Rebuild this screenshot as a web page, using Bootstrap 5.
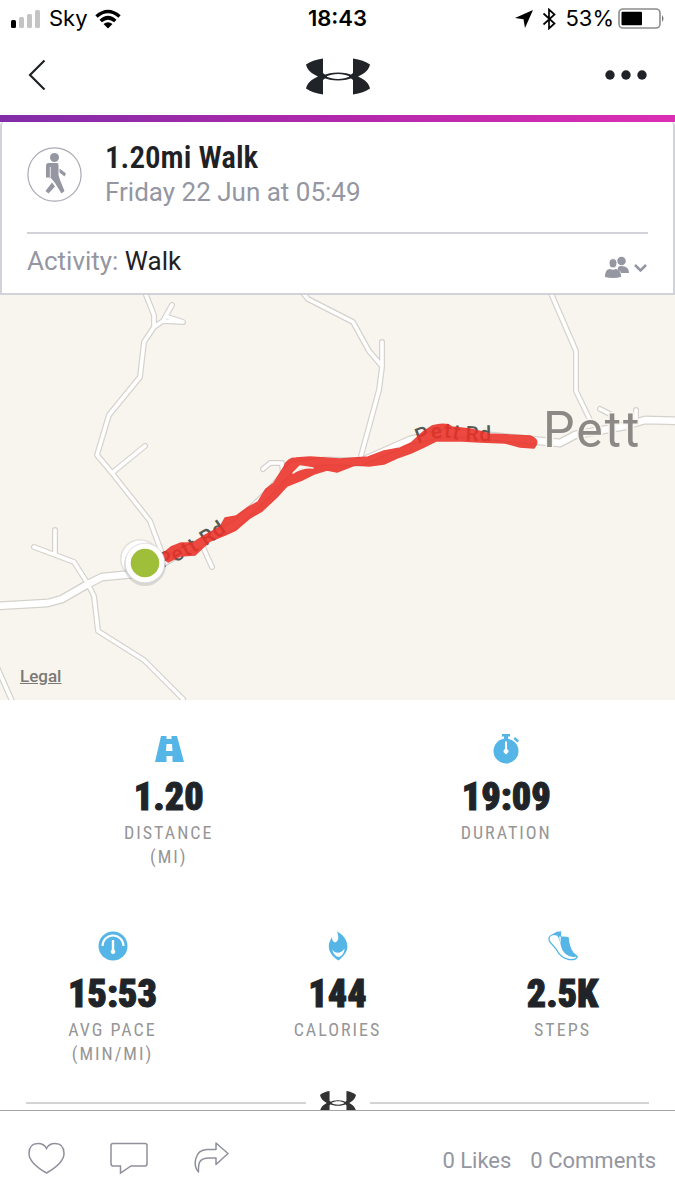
<!DOCTYPE html>
<html lang="en">
<head>
<meta charset="utf-8">
<meta name="viewport" content="width=device-width, initial-scale=1">
<title>1.20mi Walk</title>
<link rel="stylesheet" href="https://cdn.jsdelivr.net/npm/bootstrap@5.3.0/dist/css/bootstrap.min.css">
<style>
  body { font-family: Roboto, "Liberation Sans", sans-serif; color: #1f2225; background: #fff; }
  svg { display: block; flex-shrink: 0; }
  .muted { color: #9496a1; }
  .status-bar { height: 37px; padding: 0 10px; font: 22px/37px Inter, sans-serif; color: #000; }
  .status-side { flex: 1 1 0; }
  .app-header { height: 78px; padding: 0 26px; }
  .app-header .header-side { flex: 1 1 0; }
  .accent { height: 7px; background: linear-gradient(90deg, #812da7, #b128ab 50%, #dc2fb3); }
  .plain { border: 0; padding: 0; background: none; color: inherit; text-decoration: none; }
  .scroller { flex: 1 1 0; min-height: 0; overflow-y: auto; scrollbar-width: none; }
  .scroller::-webkit-scrollbar { display: none; }
  .summary { border: 2px solid #d2d3da; border-top: 0; border-radius: 4px 4px 0 0; padding: 0 25px; }
  .summary-top { height: 112px; padding-bottom: 6px; border-bottom: 2px solid #d2d3da; gap: 23px; }
  .summary-top h1 { font: 600 31px/36px "Roboto Condensed", "Open Sans Condensed", Roboto, sans-serif; margin: 0; }
  .detail { font-size: 26px; line-height: 32px; margin: 0; }
  .summary-bottom { height: 59px; padding-bottom: 6px; }
  .sharing { padding-top: 12px; }
  .map { background: #f8f5ee; }
  .map > svg { width: 100%; height: auto; }
  .legal { position: absolute; left: 20px; bottom: 12px; font: 500 17px/24px Roboto, sans-serif; color: #7b7975; }
  .stats { padding-top: 33px; }
  .stats-row { margin-bottom: 61px; }
  .stat-icon { height: 32px; margin-bottom: 8px; color: #55b5e6; }
  .stat-value { font: 900 38px/48px "Roboto Condensed", "Open Sans Condensed", Roboto, sans-serif; color: #202428; -webkit-text-stroke: 1px #202428; margin: 0; }
  .stat-label { font: 18px/24px "Roboto Condensed", "Open Sans Condensed", Roboto, sans-serif; letter-spacing: 2px; color: #969696; margin: 0; }
  .divider { padding: 0 26px; gap: 14px; margin-top: -36px; }
  .divider hr { flex: 1; margin: 0; border-top: 2px solid #d4d4d4; opacity: 1; }
  .action-bar { height: 90px; border-top: 1px solid #a5a5a8; padding: 6px 19px 0 28px; background: #fff; }
  .actions { gap: 45px; }
  .counts { gap: 19px; font-size: 22px; padding-top: 4px; }
</style>
</head>
<body>
<svg width="0" height="0" class="position-absolute" aria-hidden="true">
  <symbol id="brand" viewBox="0 0 64 36">
    <g id="brand-half">
      <path d="M17 0C10 1 4 3 0 6C1 11 5 15 12 18C5 21 1 25 0 30C4 33 10 35 17 36V21.500C19 19.500 21 19 21 18C21 17 19 16.500 17 14.500Z"/>
      <path d="M17 17C21 15 26 14 32 14V15.500C27 15.500 24 16.500 20 18C24 19.500 27 20.500 32 20.500V22C26 22 21 21 17 19Z"/>
    </g>
    <use href="#brand-half" transform="matrix(-1 0 0 1 64 0)"/>
  </symbol>
</svg>

<div class="vh-100 d-flex flex-column overflow-hidden">
  <div class="status-bar d-flex align-items-center">
    <div class="status-side d-flex align-items-center">
      <svg width="31" height="20" viewBox="0 0 31 20"><rect x="1" y="11" width="5" height="8" rx="1.500"/><g fill="#c4c4c4"><rect x="9" y="8" width="5" height="11" rx="1.500"/><rect x="17" y="5" width="5" height="14" rx="1.500"/><rect x="25" y="1" width="5" height="18" rx="1.500"/></g></svg>
      <span class="ms-2">Sky</span>
      <svg class="ms-1" width="32" height="20" viewBox="0 0 32 20" fill="none" stroke="#000" stroke-width="3.600"><path d="M4.500 7.500Q16 -2.500 27.500 7.500M8.700 12Q16 5.500 23.300 12"/><path d="M11.500 15Q16 11.500 20.500 15L16 19.500Z" fill="#000" stroke="none"/></svg>
    </div>
    <div class="fw-semibold">18:43</div>
    <div class="status-side d-flex align-items-center justify-content-end">
      <svg width="18" height="18" viewBox="0 0 18 18"><path d="M18 0L0 8L8.500 9.300L10 18Z"/></svg>
      <svg class="mx-2" width="16" height="22" viewBox="0 0 16 22" fill="none" stroke="#000" stroke-width="1.700"><path d="M2.500 5.500L13.500 15.500L8 20.500V1.500L13.500 6.500L2.500 16.500"/></svg>
      <span class="me-1">53%</span>
      <svg width="47" height="22" viewBox="0 0 47 22"><rect x="1" y="1" width="41" height="19" rx="4" fill="#fff" stroke="#8c8c8c" stroke-width="1.600"/><rect x="3.500" y="3.800" width="20.500" height="13.500" rx="1"/><path d="M44 7Q47 10.500 44 14Z" fill="#777"/></svg>
    </div>
  </div>

  <header class="app-header d-flex align-items-center">
    <div class="header-side d-flex">
      <button type="button" class="plain" aria-label="Back"><svg width="22" height="34" viewBox="0 0 22 34" fill="none" stroke="#1f2225" stroke-width="2.200"><path d="M18.500 1.500L4 16L18.500 30.500"/></svg></button>
    </div>
    <svg width="64" height="37" fill="#202428" aria-label="Brand"><use href="#brand"/></svg>
    <div class="header-side d-flex justify-content-end">
      <button type="button" class="plain" aria-label="More"><svg width="46" height="12" viewBox="0 0 46 12" fill="#202428"><circle cx="7" cy="5" r="4.700"/><circle cx="23" cy="5" r="4.700"/><circle cx="39" cy="5" r="4.700"/></svg></button>
    </div>
  </header>
  <div class="accent"></div>

  <main class="scroller">
    <section class="summary">
      <div class="summary-top d-flex align-items-center">
        <svg width="55" height="55" viewBox="0 0 55 55" fill="#9496a1"><circle cx="27.500" cy="27.500" r="26.600" fill="#fff" stroke="#aaabb5" stroke-width="1.200"/><circle cx="27.500" cy="10.500" r="4.500"/><path d="M21.500 16H30Q31.500 16 31.500 18V28L33 33L37.500 44L34.500 46.500L28 36L23.500 30.500H19V19Q19 16 21.500 16Z"/><path d="M32.500 21.500L39 26.500L37.500 29.500L32.500 25.500Z"/><path d="M25 35.500L28 39.500L21.500 46.500L18.500 44Z"/><path d="M23.300 20V30" stroke="#fff" stroke-width="0.800"/></svg>
        <div>
          <h1>1.20mi Walk</h1>
          <p class="detail muted">Friday 22 Jun at 05:49</p>
        </div>
      </div>
      <div class="summary-bottom d-flex align-items-center justify-content-between">
        <p class="detail"><span class="muted">Activity:</span> Walk</p>
        <button type="button" class="plain sharing" aria-label="Shared with friends">
          <svg width="43" height="24" viewBox="0 0 43 24" fill="#9496a1"><circle cx="16.500" cy="6" r="4.300"/><path d="M13 15Q12 11 16 11Q24 11 24 18H16Q16 16 13 15Z"/><path d="M4 7.500Q4 3.500 8 3.500T12 7.500Q12 13 8 13T4 7.500Z" stroke="#fff"/><path d="M0 22Q0 14 5 14Q8 15.500 11 14Q16 14.500 16 22Q8 24 0 22Z"/><path d="M30 10L35.500 15.500L41 10" fill="none" stroke="#9496a1" stroke-width="2.600"/></svg>
        </button>
      </div>
    </section>

    <section class="map position-relative">
      <svg viewBox="0 295 675 405" role="img" aria-label="Route map" fill="none" stroke-linecap="round" stroke-linejoin="round">
        <defs>
          <g id="lanes">
            <path d="M144 290L154 315V327L144 342L140 377L109 415L97 455L112 473L150 521L163 556M154 327L163 321L172 305M163 321L183 322L168 317M112 473L145 446"/>
            <path d="M303 293L308 299L353 322L369 351L381 365M382 342V367L379 390L361 456M263 469L270 463H282L283 476M550 291L576 351V391L590 420M600 409L612 415M636 410V420M202 545L212 567"/>
            <path d="M34 547L74 562L88 584L94 596L98 631L144 660L183 699M55 530V554M-6 660L12 701"/>
          </g>
          <g id="main-road"><path d="M-5 606L48 603L62 599L88 584L102 577L145 573L185 550L235 525L270 491L292 466L325 461L360 462L410 440L450 432L510 438L560 443L575 435L625 426L645 420L680 421"/></g>
          <path id="label-east" d="M418 444Q438 435 455 439T510 440"/>
          <path id="label-west" d="M162 568Q205 551 250 514"/>
        </defs>
        <g stroke="#d5d2cd"><use href="#lanes" stroke-width="6"/><use href="#main-road" stroke-width="9"/></g>
        <g stroke="#fff"><use href="#lanes" stroke-width="3.600"/><use href="#main-road" stroke-width="6.500"/></g>
        <g font-family="Roboto, sans-serif" font-size="21" font-weight="500" fill="#565a57">
          <text letter-spacing="1"><textPath href="#label-east">Pett Rd</textPath></text>
          <text letter-spacing="1"><textPath href="#label-west">Pett Rd</textPath></text>
        </g>
        <g fill="#eb3027" stroke="#eb3027" stroke-width="1.500" opacity="0.880">
          <path d="M160 556L171 547L181 543L193 543L202 537L220 527L225 518L236 516L247 508L258 502L266 489L274 483L284 467Q287 458 296 458L310 457L340 459L368 457L384 451L400 448L411 443L423 432L432 426Q446 422 452 427L470 429L490 434L530 436Q541 440 534 448L520 447L505 443L480 442L462 441L448 441L436 441L424 447L411 453L397 458L384 464L369 466L355 465L337 472L327 470L314 474L302 480L287 486L277 497L262 511L250 518L236 530L225 535L210 541L195 555L180 556L168 562Z"/>
          <path d="M293 473Q303 467 313 468L300 466Z" fill="#f8f5ee" stroke="#f8f5ee"/>
        </g>
        <g>
          <circle cx="140" cy="559" r="20" fill="#8a8a8a" fill-opacity="0.180"/><circle cx="140" cy="559" r="18.500" fill="#fff"/>
          <circle cx="145" cy="565" r="21" fill="#7c8088" fill-opacity="0.250"/><circle cx="145" cy="563" r="19.800" fill="#fff" stroke="#cfcfcf" stroke-width="0.600"/>
          <circle cx="145" cy="563" r="14.300" fill="#9fbf3b"/>
        </g>
        <text x="543" y="447" font-family="Roboto, sans-serif" font-size="50" letter-spacing="2" fill="#8b8986" stroke="#f8f5ee" stroke-width="3" paint-order="stroke">Pett</text>
      </svg>
      <a href="#legal" class="legal">Legal</a>
    </section>

    <section class="stats text-center">
      <div class="row g-0 stats-row">
        <div class="col-6">
          <div class="stat-icon d-flex align-items-center justify-content-center"><svg width="30" height="26" viewBox="0 0 30 26" fill="currentColor"><path fill-rule="evenodd" d="M7 0H12.500V3H17.500V0H23L30 26H18.500V20H12.500V26H1ZM12.500 8L12 15H18.500L18 8Z"/></svg></div>
          <p class="stat-value">1.20</p>
          <p class="stat-label">DISTANCE<br>(MI)</p>
        </div>
        <div class="col-6">
          <div class="stat-icon d-flex align-items-center justify-content-center"><svg width="26" height="30" viewBox="0 0 26 30" fill="currentColor"><circle cx="13" cy="17" r="12.500"/><path d="M9 0H17V2.500H15V5H11V2.500H9ZM22 3L26 6.500L24.500 8.500L20.500 5Z"/><path d="M12 7.500H14V15Q16 16 15.500 18L13 20.500L10.500 18Q10 16 12 15Z" fill="#fff"/></svg></div>
          <p class="stat-value">19:09</p>
          <p class="stat-label">DURATION</p>
        </div>
      </div>
      <div class="row g-0 stats-row">
        <div class="col-4">
          <div class="stat-icon d-flex align-items-center justify-content-center"><svg width="30" height="30" viewBox="0 0 30 30"><circle cx="15" cy="15" r="14.500" fill="currentColor"/><path d="M4.500 15A10.500 10.500 0 0 1 25.500 15" fill="none" stroke="#fff" stroke-width="2"/><path d="M13.800 9H16.200V18.500Q18 20 17 22Q15 24 13 22Q12 20 13.800 18.500Z" fill="#fff"/></svg></div>
          <p class="stat-value">15:53</p>
          <p class="stat-label">AVG PACE<br>(MIN/MI)</p>
        </div>
        <div class="col-4">
          <div class="stat-icon d-flex align-items-center justify-content-center"><svg width="20" height="30" viewBox="0 0 20 30"><path d="M9 0.500C17 4 22 14 18 21C16 25 13 27 10.500 29.500C3 25 0 19 1 13C1.500 10 3 8 4 6C4 9 5 11 7 11.500C11 10 11 6 9 0.500Z" fill="currentColor"/><path d="M4.500 18.500C7 23 13 23 16.500 17.500C16.500 22.500 13 25.500 10.500 26C8 25.500 4.500 22.500 4.500 18.500Z" fill="#fff"/></svg></div>
          <p class="stat-value">144</p>
          <p class="stat-label">CALORIES</p>
        </div>
        <div class="col-4">
          <div class="stat-icon d-flex align-items-center justify-content-center"><svg width="30" height="30" viewBox="0 0 30 30"><path d="M4 4L9 1.500L12.500 1V6L20 6.500C20.500 12 22 18 25 22L29.300 25.500C28.500 28.500 25 29 21 28.500C14 27 11 24 8.500 18.500L2 11C0 7 1 5 4 4Z" fill="#fff" stroke="currentColor" stroke-width="1.300"/><path d="M4.500 4L9 1L12.500 1V6L20 6.500C20.500 12 22 18 25 22L29 25.500C24 27 18 24.500 15 20C12.500 16 12.500 9 9 4.500Z" fill="currentColor"/><path d="M11 5.500L12.500 13L12.800 5.800Z" fill="#fff"/></svg></div>
          <p class="stat-value">2.5K</p>
          <p class="stat-label">STEPS</p>
        </div>
      </div>
    </section>
    <div class="divider d-flex align-items-center">
      <hr>
      <svg width="36" height="24" viewBox="0 0 64 36" preserveAspectRatio="none" fill="#333"><use href="#brand" width="64" height="36"/></svg>
      <hr>
    </div>
  </main>

  <footer class="action-bar d-flex align-items-center justify-content-between">
    <div class="actions d-flex align-items-center">
      <button type="button" class="plain" aria-label="Like"><svg width="37" height="34" viewBox="0 0 37 34" fill="none" stroke="#8e909c" stroke-width="1.500"><path d="M18.500 31Q1 21 1 11.500Q1 1.500 10 1.500Q16 1.500 18.500 6.500Q21 1.500 27 1.500Q36 1.500 36 11.500Q36 21 18.500 31Z"/></svg></button>
      <button type="button" class="plain" aria-label="Comment"><svg width="38" height="34" viewBox="0 0 38 34" fill="none" stroke="#8e909c" stroke-width="1.500"><path d="M3 1.500H35Q37 1.500 37 3.500V21.500Q37 24 35 24H21L10.500 31V24H3Q1 24 1 21.500V3.500Q1 1.500 3 1.500Z"/></svg></button>
      <button type="button" class="plain" aria-label="Share"><svg width="37" height="34" viewBox="0 0 37 34" fill="none" stroke="#8e909c" stroke-width="1.500" stroke-linejoin="round"><path d="M23 1L35 11.500L23 22.500V16H16C7 16 5 20 5.500 30C0 24 1 8 14 7.500H23Z"/></svg></button>
    </div>
    <div class="counts d-flex muted"><a href="#likes" class="plain">0 Likes</a><a href="#comments" class="plain">0 Comments</a></div>
  </footer>
</div>
<script src="https://cdn.jsdelivr.net/npm/bootstrap@5.3.0/dist/js/bootstrap.bundle.min.js"></script>
</body>
</html>
